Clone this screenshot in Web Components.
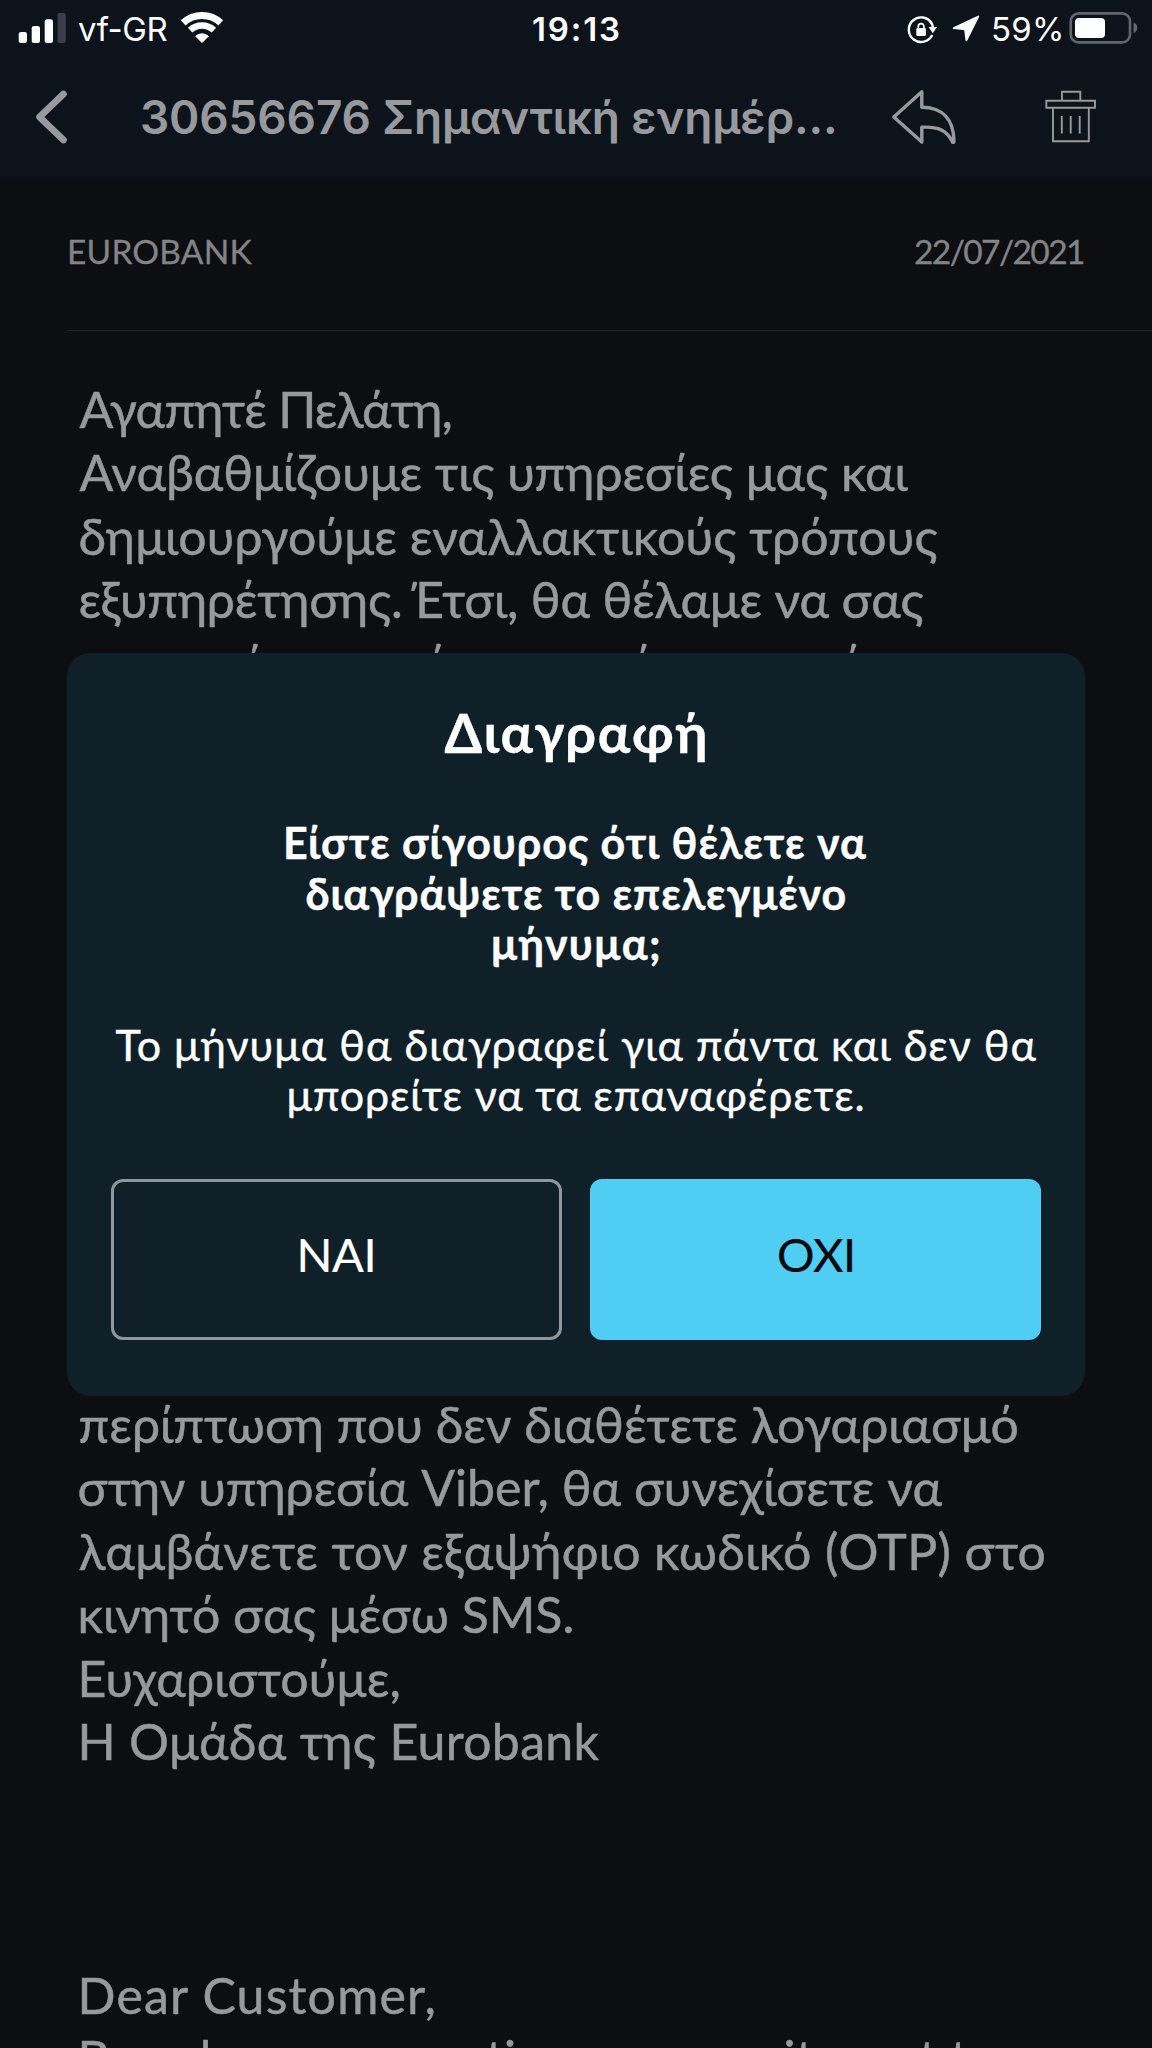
<!DOCTYPE html>
<html lang="el">
<head>
<meta charset="utf-8">
<title>Eurobank</title>
<style>
html,body{margin:0;background:#0d0e12}
body{width:1152px;height:2048px;overflow:hidden;font-family:Lato,"Open Sans","Noto Sans",sans-serif}
</style>
</head>
<body>
<mail-screen></mail-screen>
<script>
const define = (name, html, setup) => {
  const t = document.createElement('template');
  t.innerHTML = html;
  customElements.define(name, class extends HTMLElement {
    connectedCallback() {
      if (this.shadowRoot) return;
      this.attachShadow({mode: 'open'}).append(t.content.cloneNode(true));
      if (setup) setup(this);
    }
  });
};

// One line of text, tracked so that its ink spans the number of pixels in "w".
const ruler = document.createElement('canvas').getContext('2d');
define('fit-line', '<style>:host{display:block;white-space:nowrap;font-kerning:normal}</style><slot></slot>', el => {
  const s = getComputedStyle(el), text = el.textContent, w = +el.getAttribute('w');
  ruler.font = `${s.fontWeight} ${s.fontSize} ${s.fontFamily}`;
  const m = ruler.measureText(text);
  const ink = m.actualBoundingBoxLeft + m.actualBoundingBoxRight;
  el.style.width = w + 'px';
  el.style.letterSpacing = (w - ink) / ([...text].length - 1) + 'px';
  el.style.textIndent = m.actualBoundingBoxLeft + 'px';
});

define('status-bar', `<style>
:host{display:grid;grid-template-columns:1fr auto 1fr;align-items:center;height:58px;color:#fff;font:400 33px/58px Inter,sans-serif}
.side{display:flex;align-items:center}
.left{padding-left:18px}.right{justify-content:flex-end;padding-right:13px}
svg{display:block;flex:none}
.t{font-weight:600}
</style>
<div class="side left">
 <svg width="50" height="58" viewBox="18 0 50 58" fill="#fff"><rect x="18.7" y="32" width="8.3" height="11" rx="2.3"/><rect x="31.7" y="26" width="8.3" height="17" rx="2.3"/><rect x="44.7" y="19.3" width="8.3" height="23.7" rx="2.3"/><rect x="57.5" y="13" width="8.3" height="30" rx="2.3" fill="#3b3f4b"/></svg>
 <fit-line w="89.5" style="margin-left:10px">vf-GR</fit-line>
 <svg style="margin-left:12px" width="46" height="58" viewBox="180 0 46 58"><g fill="none" stroke="#fff"><path d="M183.2 22.9A27.5 27.5 0 0 1 220.8 22.9" stroke-width="7"/><path d="M190.1 30.2A17.5 17.5 0 0 1 213.9 30.2" stroke-width="6.5"/></g><path d="M202 42.5L195.7 36.2A9.5 9.5 0 0 1 208.3 36.2Z" fill="#fff" stroke="#fff" stroke-linejoin="round"/></svg>
</div>
<fit-line class="t" w="86">19:13</fit-line>
<div class="side right">
 <svg width="85" height="58" viewBox="900 0 85 58"><path d="M931.7 23.4A12.3 12.3 0 1 0 932.2 35" fill="none" stroke="#fff" stroke-width="2.4"/><path d="M928.6 27H937L932.8 33.2Z" fill="#fff"/><path d="M930.2 21.4A12.3 12.3 0 0 1 933.3 29" fill="none" stroke="#fff" stroke-width="2.4"/><rect x="916.3" y="28" width="9.6" height="8" rx="1.3" fill="#fff"/><path d="M918.3 29v-2.6a2.8 2.8 0 0 1 5.6 0v2.6" fill="none" stroke="#fff" stroke-width="1.7"/><path d="M953.8 28L978.2 16.5L966.4 40.3L965 29.3Z" fill="#fff" stroke="#fff" stroke-width="1.8" stroke-linejoin="round"/></svg>
 <fit-line w="68" style="margin-left:8px">59%</fit-line>
 <svg style="margin-left:7px" width="71" height="58" viewBox="1068 0 71 58"><rect x="1070.7" y="13.4" width="59.3" height="29" rx="8" fill="none" stroke="#62656c" stroke-width="2.6"/><rect x="1075" y="18" width="30" height="20" rx="4" fill="#fff"/><path d="M1133.5 22.5Q1137.3 24 1137.3 27.8T1133.5 33.3Z" fill="#62656c"/></svg>
</div>`);

define('nav-bar', `<style>
:host{display:flex;align-items:center;height:120px;color:#98999c;font:600 46px/116px Inter,sans-serif}
svg{display:block;flex:none;fill:none;stroke:currentColor}
.title{margin-left:72px;height:118px}
</style>
<svg style="margin-left:34px" width="36" height="120" viewBox="34 58 36 120"><path d="M63.5 94L39.5 117L63.5 140" stroke-width="6.6" stroke-linecap="round" stroke-linejoin="round"/></svg>
<fit-line class="title" w="692">30656676 Σημαντική ενημέρ...</fit-line>
<svg style="margin-left:56px" width="70" height="120" viewBox="890 58 70 120"><path d="M921.8 91.8L893.8 117L921.8 142V127.2C938 126.5 947 130 952.5 142Q954 143 954 141C953.5 120 943 107.2 921.8 107.2Z" stroke-width="3.4" stroke-linejoin="round"/></svg>
<svg style="margin-left:84px" width="54" height="120" viewBox="1044 58 54 120"><path d="M1046.3 100.8H1095V107.8H1046.3ZM1062 100.8V91.8H1080.3V100.8M1053 107.8V141.2H1088.8V107.8M1061.8 116V133.5M1070.7 116V133.5M1079.7 116V133.5" stroke-width="1.9"/></svg>`);

define('mail-meta', `<style>
:host{display:flex;align-items:center;justify-content:space-between;box-sizing:border-box;height:153px;margin-left:67px;padding:0 68px 7px 3px;border-bottom:1px solid #212226;color:#838486;font-size:33.5px;-webkit-text-stroke:.3px}
</style><fit-line w="182.5">EUROBANK</fit-line><fit-line w="169">22/07/2021</fit-line>`);

define('mail-body', `<style>
:host{display:block;padding:47px 0 0 79.5px;color:#98999b;font-size:50px;line-height:63.44px;-webkit-text-stroke:.5px}
.gap{height:calc(63.44px * 11)}.gap.s{height:calc(63.44px * 3)}
</style>
<fit-line w="371">Αγαπητέ Πελάτη,</fit-line>
<fit-line w="829">Αναβαθμίζουμε τις υπηρεσίες μας και</fit-line>
<fit-line w="857" style="margin-left:1px">δημιουργούμε εναλλακτικούς τρόπους</fit-line>
<fit-line w="847" style="margin-left:1px">εξυπηρέτησης. Έτσι, θα θέλαμε να σας</fit-line>
<fit-line w="882">ενημερώσουμε ότι μπορείτε να εισάγετε</fit-line>
<div class="gap"></div>
<fit-line w="938">περίπτωση που δεν διαθέτετε λογαριασμό</fit-line>
<fit-line w="863">στην υπηρεσία Viber, θα συνεχίσετε να</fit-line>
<fit-line w="964">λαμβάνετε τον εξαψήφιο κωδικό (OTP) στο</fit-line>
<fit-line w="492" style="margin-left:1px">κινητό σας μέσω SMS.</fit-line>
<fit-line w="317" style="margin-left:2px">Ευχαριστούμε,</fit-line>
<fit-line w="518" style="margin-left:2px">Η Ομάδα της Eurobank</fit-line>
<div class="gap s"></div>
<fit-line w="353" style="margin-left:2px">Dear Customer,</fit-line>
<fit-line w="917" style="margin-left:2px">Based on your continuous security, not to</fit-line>`);

define('dialog-button', `<style>
:host{display:flex;flex:1;align-items:center;justify-content:center;box-sizing:border-box;height:161px;padding-bottom:10px;border:3px solid #8f969c;border-radius:12px;color:#fff;font-size:47px;-webkit-text-stroke:.2px}
:host([primary]){background:#50cdf2;border-color:#50cdf2;color:#05090d}
</style><slot></slot>`);

define('confirm-dialog', `<style>
:host{display:flex;flex-direction:column;align-items:center;box-sizing:border-box;width:1018px;height:743px;padding:50px 44px 0;border-radius:24px;background:#102029;color:#fff;font-size:43px;line-height:50.5px;-webkit-text-stroke:.4px}
.h{font-weight:700;font-size:54px;line-height:60px;margin-right:3px}
.b{font-weight:700;margin:55px 0 50px;display:flex;flex-direction:column;align-items:center}
.p{display:flex;flex-direction:column;align-items:center}
.actions{display:flex;align-self:stretch;gap:28px;margin-top:58px}
</style>
<fit-line class="h" w="260">Διαγραφή</fit-line>
<div class="b"><fit-line w="580">Είστε σίγουρος ότι θέλετε να</fit-line><fit-line w="539">διαγράψετε το επελεγμένο</fit-line><fit-line w="166">μήνυμα;</fit-line></div>
<div class="p"><fit-line w="921">Το μήνυμα θα διαγραφεί για πάντα και δεν θα</fit-line><fit-line w="573">μπορείτε να τα επαναφέρετε.</fit-line></div>
<div class="actions"><dialog-button><fit-line w="72">ΝΑΙ</fit-line></dialog-button><dialog-button primary><fit-line w="73">ΟΧΙ</fit-line></dialog-button></div>`);

define('mail-screen', `<style>
:host{display:block;position:relative;width:1152px;height:2048px;overflow:hidden;background:#0d0e12}
header{background:#0c131b}
confirm-dialog{position:absolute;left:67px;top:653px}
</style>
<header><status-bar></status-bar><nav-bar></nav-bar></header>
<mail-meta></mail-meta><mail-body></mail-body>
<confirm-dialog></confirm-dialog>`);
</script>
</body>
</html>
